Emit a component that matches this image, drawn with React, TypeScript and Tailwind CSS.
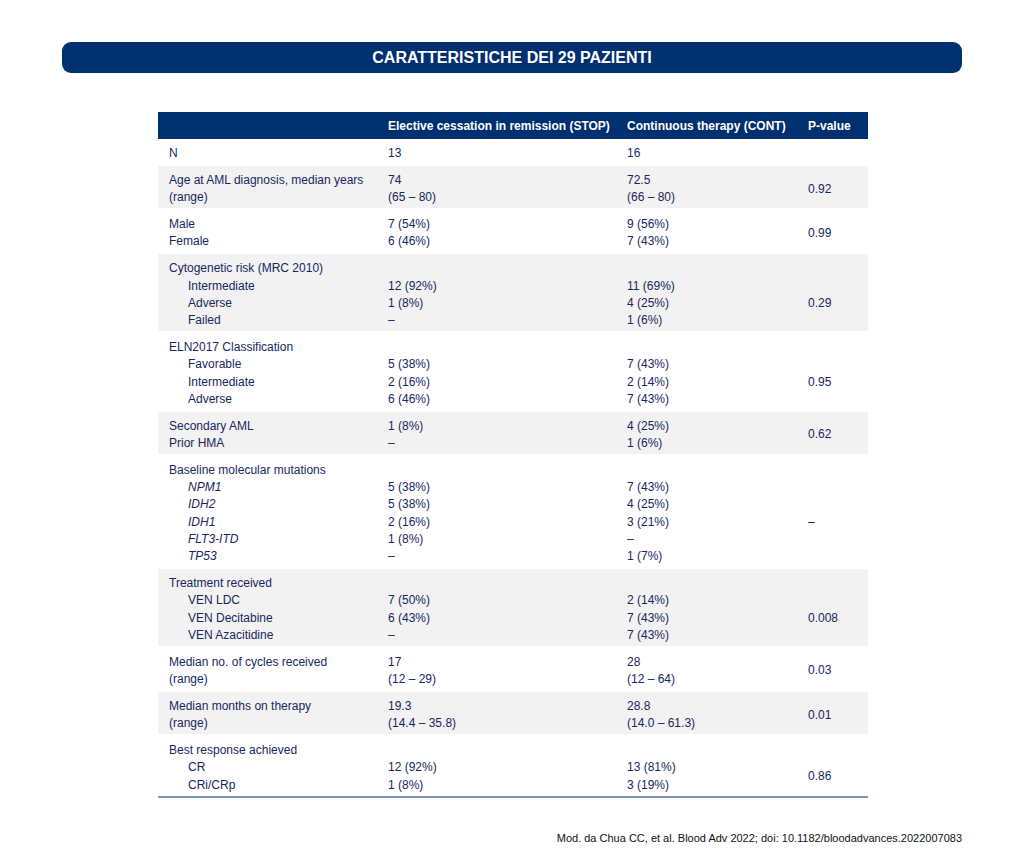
import React from "react"

type Line = { t: string; sub?: boolean; it?: boolean }

type Row = {
  label: Line[]
  stop: string[]
  cont: string[]
  p: string
  gray?: boolean
}

const rows: Row[] = [
  { label: [{ t: "N" }], stop: ["13"], cont: ["16"], p: "" },
  {
    label: [{ t: "Age at AML diagnosis, median years" }, { t: "(range)" }],
    stop: ["74", "(65 – 80)"],
    cont: ["72.5", "(66 – 80)"],
    p: "0.92",
    gray: true,
  },
  {
    label: [{ t: "Male" }, { t: "Female" }],
    stop: ["7 (54%)", "6 (46%)"],
    cont: ["9 (56%)", "7 (43%)"],
    p: "0.99",
  },
  {
    label: [
      { t: "Cytogenetic risk (MRC 2010)" },
      { t: "Intermediate", sub: true },
      { t: "Adverse", sub: true },
      { t: "Failed", sub: true },
    ],
    stop: ["", "12 (92%)", "1 (8%)", "–"],
    cont: ["", "11 (69%)", "4 (25%)", "1 (6%)"],
    p: "0.29",
    gray: true,
  },
  {
    label: [
      { t: "ELN2017 Classification" },
      { t: "Favorable", sub: true },
      { t: "Intermediate", sub: true },
      { t: "Adverse", sub: true },
    ],
    stop: ["", "5 (38%)", "2 (16%)", "6 (46%)"],
    cont: ["", "7 (43%)", "2 (14%)", "7 (43%)"],
    p: "0.95",
  },
  {
    label: [{ t: "Secondary AML" }, { t: "Prior HMA" }],
    stop: ["1 (8%)", "–"],
    cont: ["4 (25%)", "1 (6%)"],
    p: "0.62",
    gray: true,
  },
  {
    label: [
      { t: "Baseline molecular mutations" },
      { t: "NPM1", sub: true, it: true },
      { t: "IDH2", sub: true, it: true },
      { t: "IDH1", sub: true, it: true },
      { t: "FLT3-ITD", sub: true, it: true },
      { t: "TP53", sub: true, it: true },
    ],
    stop: ["", "5 (38%)", "5 (38%)", "2 (16%)", "1 (8%)", "–"],
    cont: ["", "7 (43%)", "4 (25%)", "3 (21%)", "–", "1 (7%)"],
    p: "–",
  },
  {
    label: [
      { t: "Treatment received" },
      { t: "VEN LDC", sub: true },
      { t: "VEN Decitabine", sub: true },
      { t: "VEN Azacitidine", sub: true },
    ],
    stop: ["", "7 (50%)", "6 (43%)", "–"],
    cont: ["", "2 (14%)", "7 (43%)", "7 (43%)"],
    p: "0.008",
    gray: true,
  },
  {
    label: [{ t: "Median no. of cycles received" }, { t: "(range)" }],
    stop: ["17", "(12 – 29)"],
    cont: ["28", "(12 – 64)"],
    p: "0.03",
  },
  {
    label: [{ t: "Median months on therapy" }, { t: "(range)" }],
    stop: ["19.3", "(14.4 – 35.8)"],
    cont: ["28.8", "(14.0 – 61.3)"],
    p: "0.01",
    gray: true,
  },
  {
    label: [
      { t: "Best response achieved" },
      { t: "CR", sub: true },
      { t: "CRi/CRp", sub: true },
    ],
    stop: ["", "12 (92%)", "1 (8%)"],
    cont: ["", "13 (81%)", "3 (19%)"],
    p: "0.86",
  },
]

function Lines({ items }: { items: string[] }) {
  return (
    <>
      {items.map((s, i) => (
        <div key={i}>{s === "" ? "\u00a0" : s}</div>
      ))}
    </>
  )
}

export default function App() {
  return (
    <div className="min-h-[860px] bg-white font-['Liberation_Sans',Arial,sans-serif] pt-[42px]">
      {/* title */}
      <div className="mx-auto w-[900px] h-[31px] rounded-[9px] bg-[#00306f] flex items-center justify-center">
        <h1 className="text-white font-bold text-[16px] leading-none">CARATTERISTICHE DEI 29 PAZIENTI</h1>
      </div>

      <table className="ml-[158px] mt-[39px] w-[710px] border-separate border-spacing-0 text-[12px] leading-[17.25px] text-[#16275f] table-fixed">
        <colgroup>
          <col className="w-[219px]" />
          <col className="w-[239px]" />
          <col className="w-[181px]" />
          <col className="w-[71px]" />
        </colgroup>
        <thead>
          <tr className="bg-[#00306f] text-white font-bold text-left">
            <th className="h-[27px] pl-[11px] pt-[2px] font-bold"></th>
            <th className="h-[27px] pl-[11px] pt-[2px] font-bold whitespace-nowrap">Elective cessation in remission (STOP)</th>
            <th className="h-[27px] pl-[11px] pt-[2px] font-bold whitespace-nowrap">Continuous therapy (CONT)</th>
            <th className="h-[27px] pl-[11px] pt-[2px] font-bold">P-value</th>
          </tr>
        </thead>
        <tbody>
          {rows.map((r, i) => {
            const last = i === rows.length - 1
            const border = last ? "border-[#7f96ba]" : "border-white"
            const cell = `pl-[11px] pt-[6px] pb-[1.7px] align-top border-b-2 ${border}`
            // rows with a heading line centre the p-value on the sub-lines only
            const hasHead = r.stop[0] === ""
            return (
              <tr key={i} className={r.gray ? "bg-[#f2f2f2]" : "bg-white"}>
                <td className={cell}>
                  {r.label.map((l, j) => (
                    <div key={j} className={`${l.sub ? "pl-[19px]" : ""} ${l.it ? "italic" : ""}`}>
                      {l.t}
                    </div>
                  ))}
                </td>
                <td className={cell}>
                  <Lines items={r.stop} />
                </td>
                <td className={cell}>
                  <Lines items={r.cont} />
                </td>
                <td
                  className={`pl-[11px] pb-[1.7px] align-middle border-b-2 ${border} ${
                    hasHead ? "pt-[23.25px]" : "pt-[6px]"
                  }`}
                >
                  {r.p}
                </td>
              </tr>
            )
          })}
        </tbody>
      </table>

      <div className="mx-auto w-[900px] mt-[34px] text-right text-[11px] leading-[13px] text-[#111]">
        Mod. da Chua CC, et al. Blood Adv 2022; doi: 10.1182/bloodadvances.2022007083
      </div>
    </div>
  )
}
